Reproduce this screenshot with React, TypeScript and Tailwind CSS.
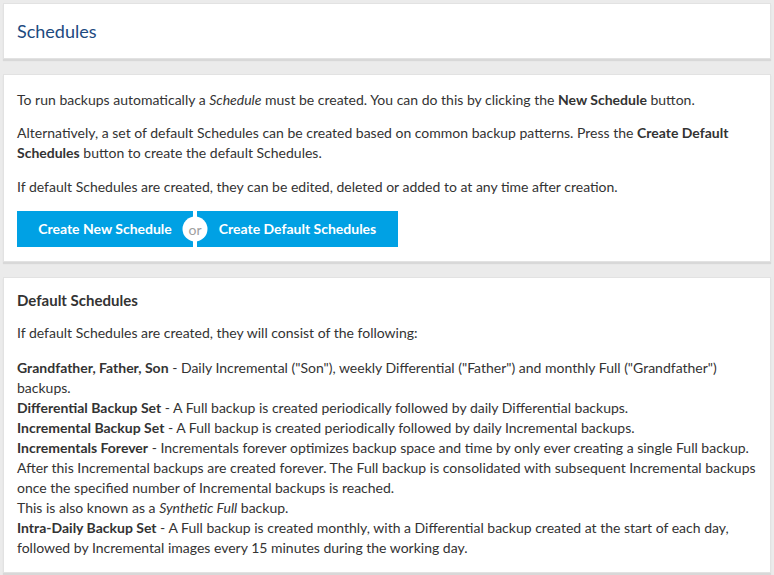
const font = { fontFamily: "Lato, 'Open Sans', sans-serif" };

function Card({ children, className = "" }: { children: React.ReactNode; className?: string }) {
  return (
    <div
      className={`mx-[3px] bg-white border border-[#e2e2e2] shadow-[0_2px_1px_rgba(0,0,0,0.08)] ${className}`}
    >
      {children}
    </div>
  );
}

export default function App() {
  return (
    <div
      className="min-h-[575px] bg-[#ebebeb] pt-[3px] pb-[3px] flex flex-col gap-[15px] text-[14px] leading-[20px] text-[#333]"
      style={font}
    >
      <Card className="h-[56px] flex items-center px-[13px]">
        <h1 className="text-[18px] text-[#1d4a7f]">Schedules</h1>
      </Card>

      <Card className="px-[13px] pt-[15px] pb-[14px]">
        <p>
          To run backups automatically a <i>Schedule</i> must be created. You can do this by clicking the{" "}
          <b className="font-bold">New Schedule</b> button.
        </p>
        <p className="mt-[13px]">
          Alternatively, a set of default Schedules can be created based on common backup patterns. Press the{" "}
          <b className="font-bold">Create Default Schedules</b> button to create the default Schedules.
        </p>
        <p className="mt-[14px]">
          If default Schedules are created, they can be edited, deleted or added to at any time after creation.
        </p>
        <div className="mt-[14px] flex items-stretch h-[36px]">
          <button className="bg-[#00a1e4] text-white font-bold w-[176px] text-center">
            Create New Schedule
          </button>
          <div className="relative w-[4px] bg-white">
            <span className="absolute left-1/2 top-1/2 -translate-x-1/2 -translate-y-1/2 w-[25px] h-[25px] rounded-full bg-white flex items-center justify-center text-[#a0a0a0] text-[14px] leading-none">
              or
            </span>
          </div>
          <button className="bg-[#00a1e4] text-white font-bold w-[201px] text-center">
            Create Default Schedules
          </button>
        </div>
      </Card>

      <Card className="px-[13px] pt-[12px] pb-[14px]">
        <h2 className="text-[15px] font-bold">Default Schedules</h2>
        <p className="mt-[13px]">If default Schedules are created, they will consist of the following:</p>
        <div className="mt-[15px]">
          <p>
            <b>Grandfather, Father, Son</b> - Daily Incremental ("Son"), weekly Differential ("Father") and monthly
            Full ("Grandfather") backups.
          </p>
          <p>
            <b>Differential Backup Set</b> - A Full backup is created periodically followed by daily Differential
            backups.
          </p>
          <p>
            <b>Incremental Backup Set</b> - A Full backup is created periodically followed by daily Incremental
            backups.
          </p>
          <p>
            <b>Incrementals Forever</b> - Incrementals forever optimizes backup space and time by only ever creating a
            single Full backup.
            <br />
            After this Incremental backups are created forever. The Full backup is consolidated with subsequent
            Incremental backups once the specified number of Incremental backups is reached.
            <br />
            This is also known as a <i>Synthetic Full</i> backup.
          </p>
          <p>
            <b>Intra-Daily Backup Set</b> - A Full backup is created monthly, with a Differential backup created at
            the start of each day, followed by Incremental images every 15 minutes during the working day.
          </p>
        </div>
      </Card>
    </div>
  );
}
